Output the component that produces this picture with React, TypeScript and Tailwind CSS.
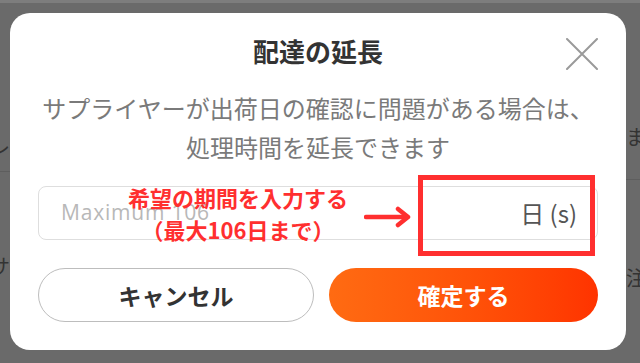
import React from "react";

const jp = { fontFamily: '"Noto Sans CJK JP", "Noto Sans", sans-serif' };

function CloseIcon() {
  return (
    <svg width="32" height="32" viewBox="0 0 32 32" className="block">
      <path d="M1 1 L31 31 M31 1 L1 31" stroke="#9a9a9a" strokeWidth="2" strokeLinecap="round" fill="none" />
    </svg>
  );
}

function Arrow() {
  return (
    <svg width="48" height="22" viewBox="0 0 48 22" className="block">
      <path d="M2 11 H42" stroke="#ff2f2f" strokeWidth="4.5" strokeLinecap="round" fill="none" />
      <path d="M34 3 L44 11 L34 19" stroke="#ff2f2f" strokeWidth="4.5" strokeLinecap="round" strokeLinejoin="round" fill="none" />
    </svg>
  );
}

export default function App() {
  return (
    <div className="relative h-[363px] w-[640px] overflow-hidden bg-[#6a6a6a]" style={jp}>
      {/* page behind the dimmed overlay */}
      <div className="h-[3px] w-full bg-[#7d7d7d]" />
      <div className="flex h-[360px] justify-between text-[20px] text-[#333]">
        <div className="flex w-[12px] flex-col overflow-hidden">
          <div className="ml-[-10px] mt-[132px] leading-[24px]">レ</div>
          <div className="mt-[12px] h-px w-full bg-[#5e5e5e]" />
          <div className="ml-[-10px] mt-[82px] leading-[24px]">サ</div>
        </div>
        <div className="flex w-[14px] flex-col overflow-hidden">
          <div className="mt-[122px] leading-[24px]">ま</div>
          <div className="mt-[30px] h-px w-full bg-[#5e5e5e]" />
          <div className="mt-[86px] leading-[24px]">注</div>
        </div>
      </div>

      {/* modal */}
      <div className="absolute left-[10px] top-[13px] flex h-[337px] w-[616px] flex-col rounded-[20px] bg-white px-[28px]">
        <div className="relative flex h-[55px] items-end justify-center">
          <h2 className="text-[26px] font-bold leading-[34px] text-[#333]">配達の延長</h2>
          <button className="absolute right-[0px] top-[25px]">
            <CloseIcon />
          </button>
        </div>
        <p className="mt-[20px] text-center text-[24px] leading-[39px] text-[#7a7a7a]">
          サプライヤーが出荷日の確認に問題がある場合は、
          <br />
          処理時間を延長できます
        </p>
        <div className="mt-[20px] flex h-[54px] items-center justify-between rounded-[8px] border-[1.5px] border-[#dedede] pl-[22px] pr-[20px]">
          <span className="text-[21px] tracking-[0.8px] text-[#b8b8b8]" style={{ fontFamily: '"Open Sans", sans-serif' }}>
            Maximum 106
          </span>
          <span className="text-[24px] text-[#555]">日 (s)</span>
        </div>
        <div className="mt-[28px] flex gap-[15px]">
          <button className="h-[54px] w-[276px] rounded-full border-[1.5px] border-[#bdbdbd] text-[23px] font-bold text-[#333]">
            キャンセル
          </button>
          <button className="h-[54px] flex-1 rounded-full bg-gradient-to-r from-[#ff6b12] to-[#ff3300] text-[23px] font-bold text-white">
            確定する
          </button>
        </div>

        {/* annotation */}
        <div className="absolute left-[118px] top-[168px] flex flex-col items-center text-[22px] font-bold leading-[32px] text-[#ff2f2f]">
          <span>希望の期間を入力する</span>
          <span>（最大106日まで）</span>
        </div>
        <div className="absolute left-[354px] top-[193px]">
          <Arrow />
        </div>
        <div className="absolute left-[408px] top-[162px] h-[81px] w-[177px] border-[5px] border-[#ff2f2f]" />
      </div>
    </div>
  );
}
